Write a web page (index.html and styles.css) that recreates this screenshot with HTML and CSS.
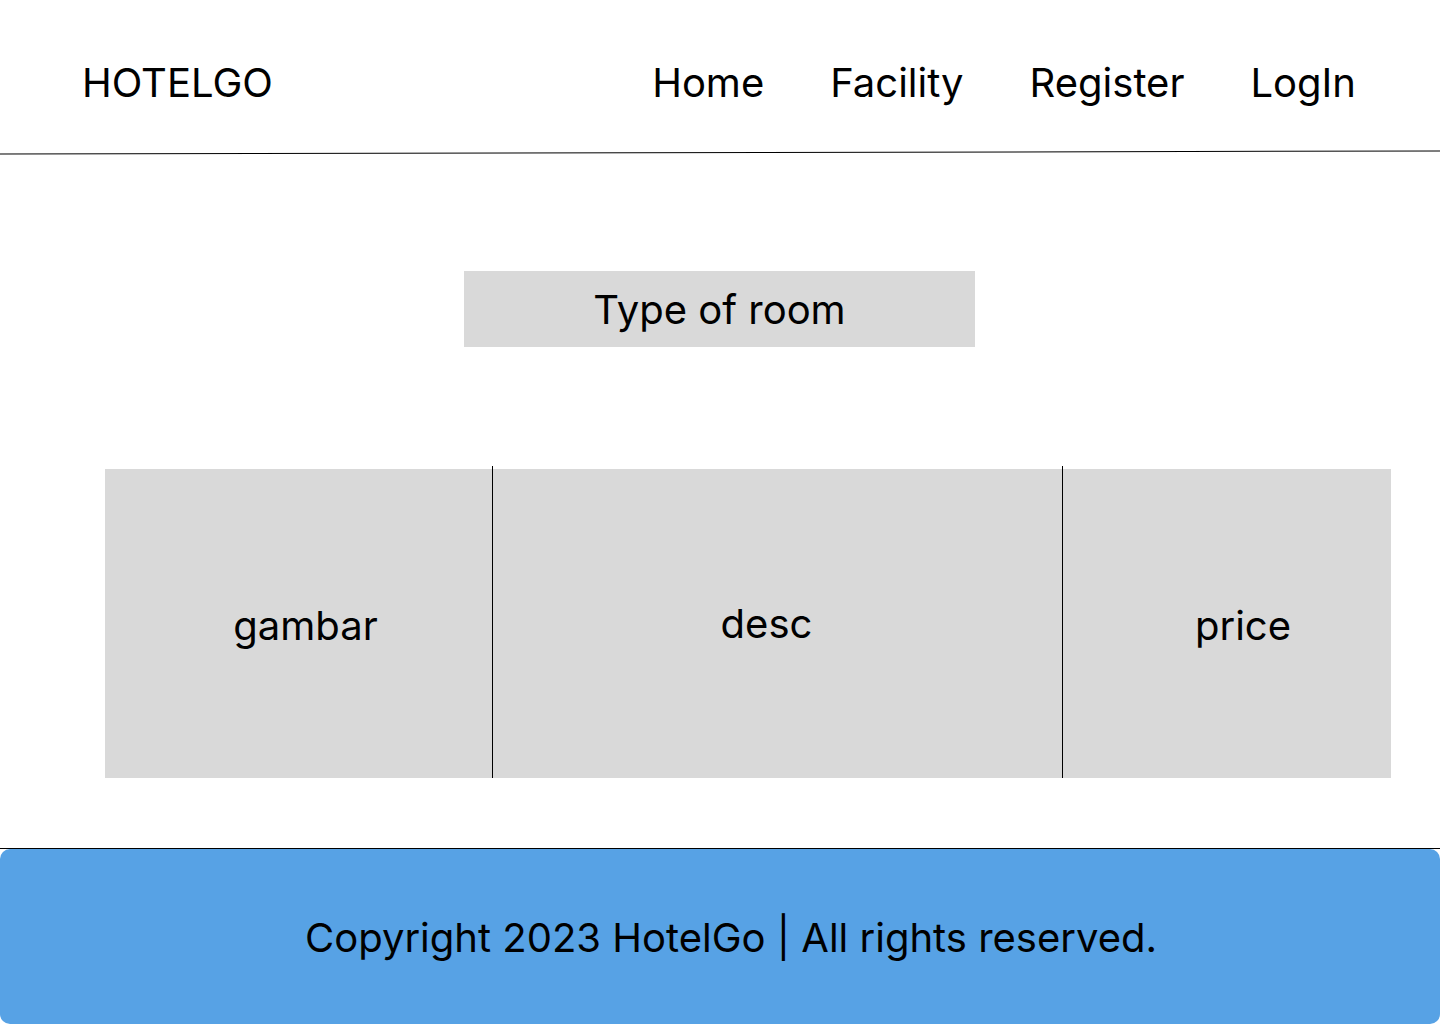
FILE: index.html
```html
<!DOCTYPE html>
<html lang="en">
<head>
<meta charset="utf-8">
<title>HotelGo</title>
<link rel="stylesheet" href="styles.css">
</head>
<body>
<header class="site-header">
  <div class="brand">HOTELGO</div>
  <nav class="nav">
    <a class="nav-link" href="#">Home</a>
    <a class="nav-link" href="#">Facility</a>
    <a class="nav-link" href="#">Register</a>
    <a class="nav-link" href="#">LogIn</a>
  </nav>
</header>
<div class="header-rule"></div>
<main class="main">
  <div class="title-box">Type of room</div>
  <div class="room-row">
    <div class="cell cell-img">gambar</div>
    <div class="divider"></div>
    <div class="cell cell-desc">desc</div>
    <div class="divider"></div>
    <div class="cell cell-price">price</div>
  </div>
</main>
<footer class="footer">
  <div class="footer-box">Copyright 2023 HotelGo | All rights reserved.</div>
</footer>
</body>
</html>
```

FILE: styles.css
```css
html, body {
  margin: 0;
  padding: 0;
  background: #ffffff;
}
body {
  font-family: "Inter", "Noto Sans", sans-serif;
  color: #000;
  width: 1440px;
  height: 1024px;
  overflow: hidden;
}
.site-header {
  height: 152px;
  box-sizing: border-box;
  padding: 59px 84px 0 82px;
  display: flex;
  justify-content: space-between;
  align-items: flex-start;
}
.brand {
  font-size: 40px;
  line-height: 48px;
}
.nav {
  display: flex;
  gap: 66px;
}
.nav-link {
  font-size: 40px;
  line-height: 48px;
  color: #000;
  text-decoration: none;
}
.header-rule {
  height: 1px;
  background: #000;
  transform: rotate(-0.12deg);
}
.main {
  display: flex;
  flex-direction: column;
  align-items: center;
}
.title-box {
  margin-top: 118px;
  margin-left: -1px;
  width: 511px;
  height: 76px;
  background: #d9d9d9;
  display: flex;
  align-items: center;
  justify-content: center;
  font-size: 40px;
}
.room-row {
  margin-top: 122px;
  align-self: flex-start;
  margin-left: 105px;
  display: flex;
  height: 309px;
}
.cell {
  background: #d9d9d9;
  display: flex;
  align-items: center;
  justify-content: center;
  font-size: 40px;
  box-sizing: border-box;
}
.cell-img { width: 387px; padding-left: 14px; padding-top: 4px; }
.cell-desc { width: 569px; padding-right: 22px; }
.cell-price { width: 328px; padding-left: 32px; padding-top: 4px; }
.divider {
  width: 1px;
  background: #000;
  margin-top: -3px;
}
.footer {
  margin-top: 70px;
  border-top: 1px solid #000;
}
.footer-box {
  height: 175px;
  background: #57a2e5;
  border-radius: 10px;
  display: flex;
  align-items: center;
  justify-content: center;
  padding-left: 22px;
  padding-top: 2px;
  font-size: 40px;
  box-sizing: border-box;
}
```
